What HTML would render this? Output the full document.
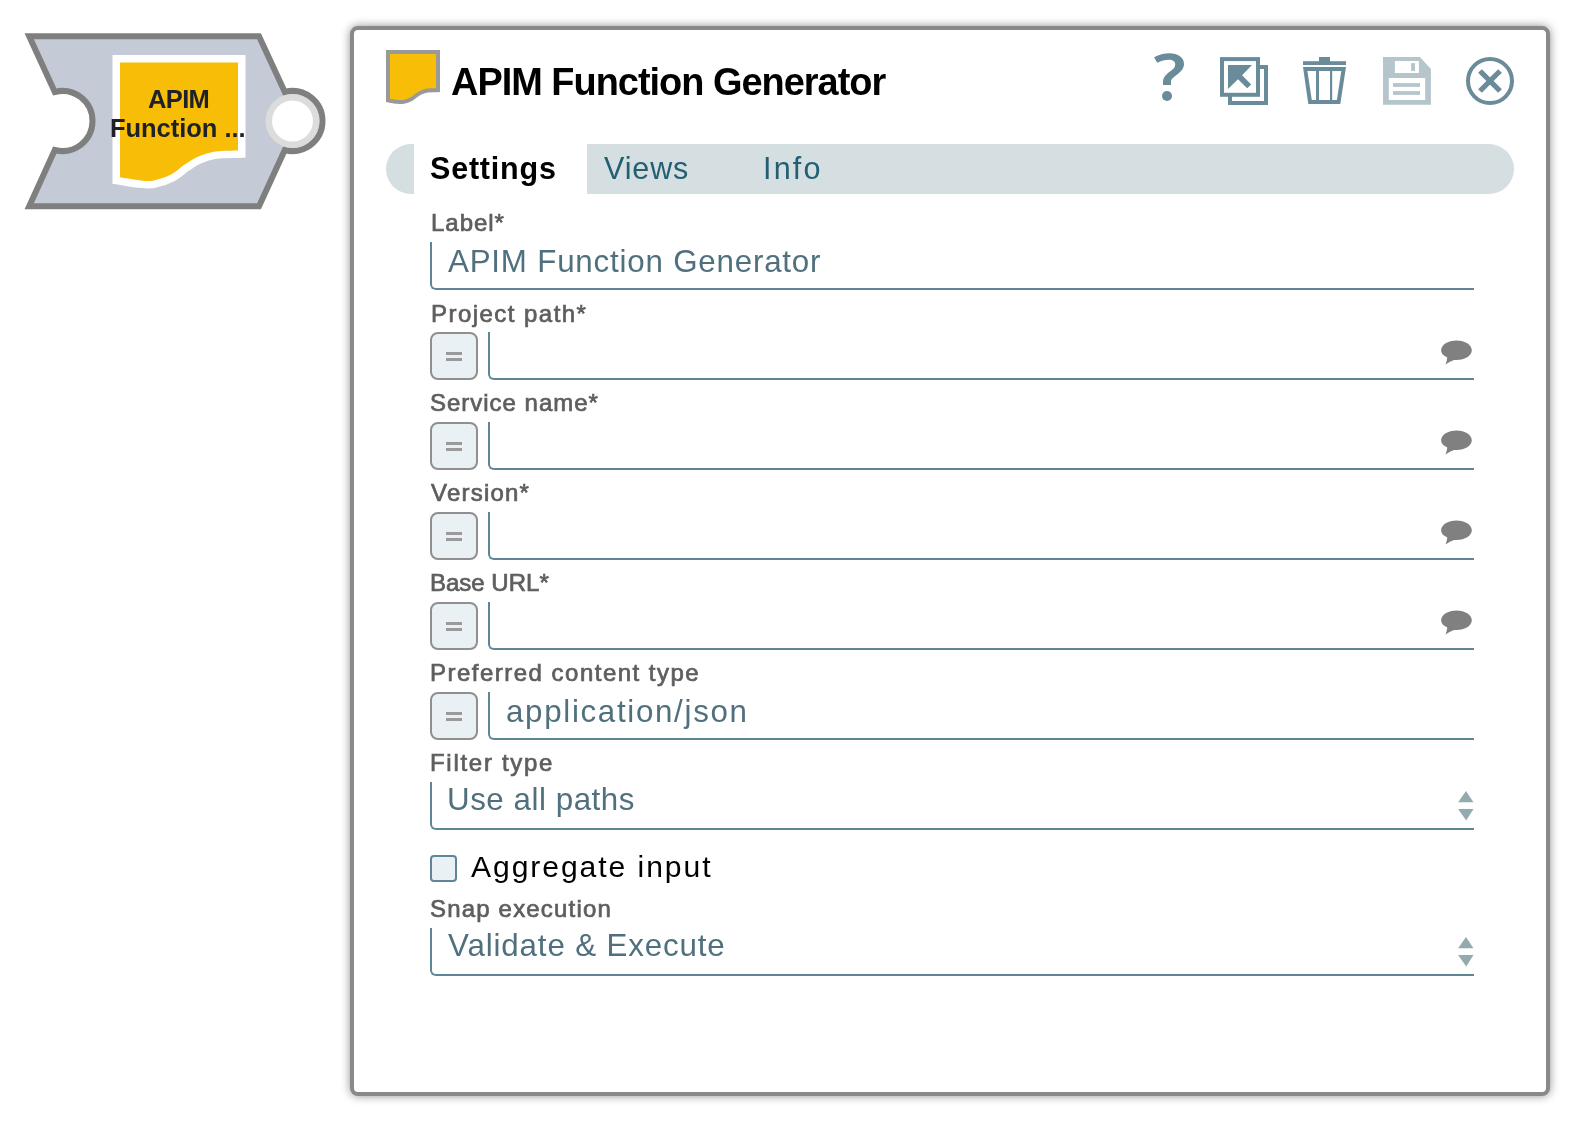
<!DOCTYPE html>
<html><head><meta charset="utf-8">
<style>
html,body{margin:0;padding:0;background:#fff;width:1594px;height:1130px;overflow:hidden;position:relative;font-family:"Liberation Sans",sans-serif;}
.t{position:absolute;white-space:nowrap;line-height:1;will-change:transform;}
.lbl{font-weight:bold;color:#5e5e5e;font-size:24.9px;}
.val{color:#4b6f7d;font-size:31.8px;}
#dlg{position:absolute;left:350px;top:26px;width:1192px;height:1062px;border:4px solid #898989;border-radius:8px;box-shadow:0 0 10px rgba(0,0,0,.44);background:#fff;}
.fld{position:absolute;border-left:2px solid #5e8696;border-bottom:2px solid #5e8696;border-bottom-left-radius:6px;box-sizing:border-box;}
.eq{position:absolute;width:48px;height:48px;box-sizing:border-box;border:2px solid #8f8f8f;border-radius:8px;background:#e9f1f4;left:430px;}
.eq:before,.eq:after{content:"";position:absolute;left:14px;width:16px;height:3px;background:#9a9a9a;}
.eq:before{top:18px}.eq:after{top:24px}
svg{position:absolute;left:0;top:0;}
</style></head><body>
<svg width="1594" height="1130">
  <!-- snap shape -->
  <path d="M29.2,36.2 L259,36.2 L284.8,92 A30,30 0 1 1 284.8,150 L259,206.3 L29.2,206.3 L54.8,150 A30,30 0 1 0 54.8,92 Z" fill="#c4cad6" stroke="#7f7f7f" stroke-width="6" stroke-linejoin="miter"/>
  <circle cx="292.5" cy="121" r="27" fill="#dcdcdc"/>
  <circle cx="292.5" cy="121" r="20.5" fill="#fff"/>
  <path transform="translate(120,62.5)" d="M0,0 H118 V87.9 C114.2,88.1 102.1,87.9 95.4,88.9 C88.7,90.0 82.9,92.0 77.8,94.2 C72.7,96.4 69.1,99.2 64.7,102.1 C60.3,105.0 56.6,109.2 51.5,111.8 C46.4,114.4 39.1,116.9 34.0,117.9 C28.9,118.9 26.4,118.4 20.7,117.9 C15.0,117.4 3.4,115.3 0,114.8 Z" fill="#f8bd06" stroke="#fff" stroke-width="15" paint-order="stroke" stroke-linejoin="miter"/>
</svg>
<div class="t" style="left:148.1px;top:87.21px;font-size:25.5px;letter-spacing:-0.633px;color:#1e2128;font-weight:bold">APIM</div>
<div class="t" style="left:110.4px;top:116.21px;font-size:25.5px;letter-spacing:-0.036px;color:#1e2128;font-weight:bold">Function ...</div>

<div id="dlg"></div>
<svg width="1594" height="1130">
  <!-- header doc icon -->
  <path transform="translate(390,53.9) scale(0.39)" d="M0,0 H118 V87.9 C114.2,88.1 102.1,87.9 95.4,88.9 C88.7,90.0 82.9,92.0 77.8,94.2 C72.7,96.4 69.1,99.2 64.7,102.1 C60.3,105.0 56.6,109.2 51.5,111.8 C46.4,114.4 39.1,116.9 34.0,117.9 C28.9,118.9 26.4,118.4 20.7,117.9 C15.0,117.4 3.4,115.3 0,114.8 Z" fill="#f8bd06" stroke="#999" stroke-width="20.5" paint-order="stroke" stroke-linejoin="miter"/>
  <!-- question -->
  <g fill="#6a8b99">
    <path d="M1154.1,57.2 C1159,54.5 1164,53.2 1169.5,53.2 C1178,53.2 1184,57.5 1184,63.8 C1184,68.5 1181,71.5 1177.5,74.3 C1173,77.8 1171,79 1171,82 V85 H1163 V82 C1163,77.5 1166,74.5 1170,71.6 C1173.5,69 1175.2,67.5 1175.2,64.3 C1175.2,61.5 1172.8,59.8 1169,59.8 C1165.3,59.8 1161,61 1157.2,62.8 Z"/>
    <circle cx="1167" cy="96" r="5"/>
  </g>
  <!-- expand -->
  <g fill="none" stroke="#6a8b99" stroke-width="4">
    <rect x="1222" y="59.1" width="36" height="35.7"/>
    <path d="M1258,67 H1266 V103 H1230 V94.8"/>
  </g>
  <g fill="#6a8b99">
    <path d="M1228,65 H1252 L1242.1,75.2 L1251.2,84.4 L1247.2,88.2 L1238,79.3 L1228,88.9 Z"/>
  </g>
  <!-- trash -->
  <g fill="#6a8b99">
    <rect x="1319" y="57" width="11" height="5"/>
    <rect x="1303" y="61.2" width="43" height="3.8"/>
    <path fill-rule="evenodd" d="M1303,67.1 H1346 L1340.3,104.1 H1308.3 Z M1307.4,70.9 L1311.8,100 H1316 V70.9 Z M1319,70.9 V100 H1330 V70.9 Z M1332.2,70.9 V100 H1336.9 L1341.3,70.9 Z"/>
  </g>
  <!-- save -->
  <path fill="#b5c5cc" fill-rule="evenodd" d="M1383,57 H1419.9 L1430.9,69 V104.8 H1383 Z M1394.9,61 V73 H1418.9 V61 Z M1388.8,77.9 V100 H1425.2 V77.9 Z"/>
  <g fill="#b5c5cc">
    <rect x="1411.1" y="63.1" width="3.9" height="7.8"/>
    <rect x="1393" y="83.1" width="27" height="3.8"/>
    <rect x="1393" y="91.1" width="27" height="3.8"/>
  </g>
  <!-- close -->
  <g fill="none" stroke="#6a8b99">
    <circle cx="1490" cy="81" r="22" stroke-width="4"/>
    <path d="M1480,71 L1500,91 M1500,71 L1480,91" stroke-width="5.3"/>
  </g>
  <!-- tab bar -->
  <path d="M411,144 H1489 A25,25 0 0 1 1489,194 H411 A25,25 0 0 1 411,144 Z" fill="#d5dee1"/>
  <rect x="414" y="144" width="173" height="50" fill="#fff"/>
  <!-- comment bubbles -->
  <g fill="#808080" id="bub">
    <path d="M1456.5,340.5 C1465,340.5 1471.8,344.9 1471.8,350.2 C1471.8,355.6 1465,360 1456.5,360 C1455.5,360 1454.5,360 1454,360 C1451,361 1448,363 1445.5,364.6 C1446.3,362.5 1447,360 1447.3,357.5 C1443.5,355.8 1441.1,353.2 1441.1,350.2 C1441.1,344.9 1448,340.5 1456.5,340.5 Z"/>
  </g>
  <use href="#bub" y="90"/>
  <use href="#bub" y="180"/>
  <use href="#bub" y="270"/>
  <!-- spinners -->
  <g fill="#94aab0" id="spin">
    <path d="M1466,790.9 L1473.5,802.2 H1458.1 Z"/>
    <path d="M1458.1,808.9 H1473.5 L1466.2,820.6 Z"/>
  </g>
  <use href="#spin" y="146"/>
</svg>

<div class="t" style="left:451.2px;top:63.52px;font-size:37.9px;letter-spacing:-0.982px;color:#000;font-weight:bold">APIM Function Generator</div>
<div class="t" style="left:429.8px;top:152.78px;font-size:30.5px;letter-spacing:0.8px;color:#000;font-weight:bold">Settings</div>
<div class="t" style="left:604.1px;top:152.88px;font-size:30.5px;letter-spacing:0.875px;color:#235f73">Views</div>
<div class="t" style="left:762.7px;top:152.88px;font-size:30.5px;letter-spacing:2.2px;color:#235f73">Info</div>

<div class="t" style="left:430.5px;top:211.08px;font-size:24.0px;letter-spacing:0.98px;color:#5e5e5e;-webkit-text-stroke:0.7px #5e5e5e">Label*</div>
<div class="fld" style="left:430px;top:242px;width:1044px;height:48px"></div>
<div class="t" style="left:448.2px;top:246.1px;font-size:31.3px;letter-spacing:0.8px;color:#50707d">APIM Function Generator</div>

<div class="t" style="left:430.5px;top:301.68px;font-size:24.0px;letter-spacing:1.458px;color:#5e5e5e;-webkit-text-stroke:0.7px #5e5e5e">Project path*</div>
<div class="eq" style="top:332px"></div>
<div class="fld" style="left:488px;top:332px;width:986px;height:48px"></div>

<div class="t" style="left:430.0px;top:391.28px;font-size:24.0px;letter-spacing:0.983px;color:#5e5e5e;-webkit-text-stroke:0.7px #5e5e5e">Service name*</div>
<div class="eq" style="top:422px"></div>
<div class="fld" style="left:488px;top:422px;width:986px;height:48px"></div>

<div class="t" style="left:431.0px;top:480.88px;font-size:24.0px;letter-spacing:1.214px;color:#5e5e5e;-webkit-text-stroke:0.7px #5e5e5e">Version*</div>
<div class="eq" style="top:512px"></div>
<div class="fld" style="left:488px;top:512px;width:986px;height:48px"></div>

<div class="t" style="left:430.0px;top:570.88px;font-size:24.0px;letter-spacing:0.0px;color:#5e5e5e;-webkit-text-stroke:0.7px #5e5e5e">Base URL*</div>
<div class="eq" style="top:602px"></div>
<div class="fld" style="left:488px;top:602px;width:986px;height:48px"></div>

<div class="t" style="left:430.0px;top:660.88px;font-size:24.0px;letter-spacing:1.486px;color:#5e5e5e;-webkit-text-stroke:0.7px #5e5e5e">Preferred content type</div>
<div class="eq" style="top:692px"></div>
<div class="fld" style="left:488px;top:692px;width:986px;height:48px"></div>
<div class="t" style="left:506.0px;top:695.8px;font-size:31.3px;letter-spacing:1.68px;color:#50707d">application/json</div>

<div class="t" style="left:430.0px;top:751.18px;font-size:24.0px;letter-spacing:1.71px;color:#5e5e5e;-webkit-text-stroke:0.7px #5e5e5e">Filter type</div>
<div class="fld" style="left:430px;top:782px;width:1044px;height:48px"></div>
<div class="t" style="left:446.9px;top:784.2px;font-size:31.3px;letter-spacing:0.542px;color:#50707d">Use all paths</div>

<div style="position:absolute;left:430px;top:855px;width:27px;height:27px;box-sizing:border-box;border:2px solid #5e8696;border-radius:4px;background:#e9f1f4"></div>
<div class="t" style="left:470.8px;top:852.02px;font-size:30.1px;letter-spacing:1.929px;color:#000">Aggregate input</div>

<div class="t" style="left:429.9px;top:897.18px;font-size:24.0px;letter-spacing:1.177px;color:#5e5e5e;-webkit-text-stroke:0.7px #5e5e5e">Snap execution</div>
<div class="fld" style="left:430px;top:928px;width:1044px;height:48px"></div>
<div class="t" style="left:448.2px;top:930.1px;font-size:31.3px;letter-spacing:0.859px;color:#50707d">Validate &amp; Execute</div>
</body></html>
